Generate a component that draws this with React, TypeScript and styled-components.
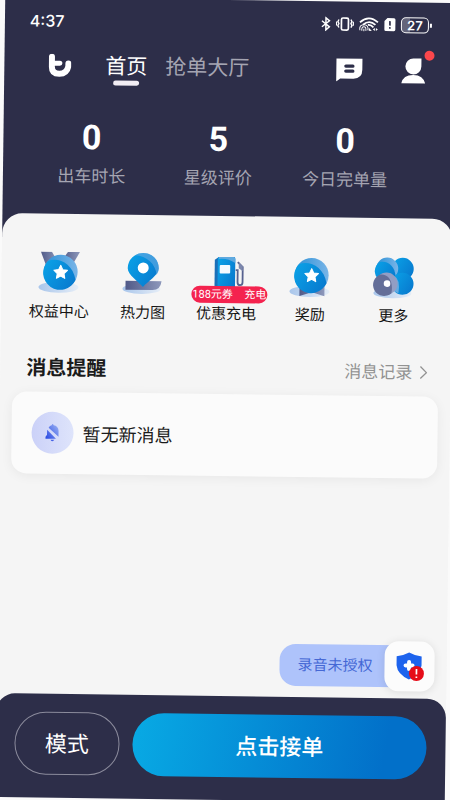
import React from "react";
import styled, { createGlobalStyle } from "styled-components";

const NAVY = "#2d2e49";
const PAPER = "#f5f5f5";

const GlobalStyle = createGlobalStyle`
  * { box-sizing: border-box; }
  body {
    margin: 0;
    overflow: hidden;
    background: #fafafa;
    font-family: Roboto, "Noto Sans CJK SC", sans-serif;
  }
  button { font: inherit; border: 0; padding: 0; background: none; cursor: pointer; }
  a { color: inherit; text-decoration: none; }
  h2, p, dl, dt, dd, ul { margin: 0; padding: 0; }
  svg { display: block; flex: none; }
`;

const Screen = styled.div`
  display: flex;
  flex-direction: column;
  min-height: 100vh;
  background: linear-gradient(${NAVY} 240px, ${PAPER} 240px);
  transform: rotate(0.75deg);
`;

const StatusBar = styled.header`
  display: flex;
  align-items: center;
  justify-content: space-between;
  height: 45px;
  padding: 0 23px 0 25px;
  color: #fff;
`;

const Clock = styled.time`
  font: 500 16px Inter, sans-serif;
`;

const StatusIcons = styled.div`
  display: flex;
  align-items: center;
  gap: 5px;
`;

const Battery = styled.span`
  display: flex;
  align-items: center;
  gap: 1px;
  &::after {
    content: "";
    width: 2px;
    height: 4px;
    background: #fff;
  }
`;

const BatteryLevel = styled.span`
  width: 28px;
  border: 1px solid #fff;
  border-radius: 5px;
  background: linear-gradient(90deg, #64657b 30%, transparent 30%);
  font: 600 13px/14px Inter, sans-serif;
  text-align: center;
`;

const TopNav = styled.nav`
  display: flex;
  align-items: center;
  height: 46px;
  padding: 0 29px 0 44px;
`;

const NavTabs = styled.div`
  display: flex;
  flex: 1;
  gap: 18px;
  margin-left: 34px;
`;

const Tab = styled.a<{ $active?: boolean }>`
  position: relative;
  font-size: 21px;
  line-height: 32px;
  color: ${(p) => (p.$active ? "#fff" : "#a5a5b2")};
  &::after {
    content: "";
    display: ${(p) => (p.$active ? "block" : "none")};
    position: absolute;
    left: 8px;
    right: 8px;
    bottom: -3px;
    height: 5px;
    border-radius: 3px;
    background: #f1edf3;
  }
`;

const NavActions = styled.div`
  display: flex;
  align-items: center;
  gap: 38px;
`;

const IconButton = styled.button`
  position: relative;
`;

const Dot = styled.span`
  position: absolute;
  top: -7px;
  right: -9px;
  width: 10px;
  height: 10px;
  border-radius: 50%;
  background: #fb474c;
`;

const Stats = styled.dl`
  display: grid;
  grid-template-columns: repeat(3, 1fr);
  padding: 28px 45px 26px 25px;
  text-align: center;
`;

const Stat = styled.div`
  display: flex;
  flex-direction: column-reverse;
  gap: 7px;
  dt {
    color: #a5a5b2;
    font-size: 17px;
    line-height: 24px;
    white-space: nowrap;
  }
  dd {
    color: #fff;
    font-size: 34px;
    font-weight: 700;
    line-height: 40px;
  }
`;

const Main = styled.main`
  display: flex;
  flex: 1;
  flex-direction: column;
  padding: 38px 12px 0;
  border-radius: 20px 20px 0 0;
  background: ${PAPER};
`;

const Shortcuts = styled.ul`
  display: grid;
  grid-template-columns: repeat(5, 1fr);
  margin: 0 4px;
  list-style: none;
`;

const Shortcut = styled.button`
  position: relative;
  display: flex;
  flex-direction: column;
  align-items: center;
  gap: 4px;
  width: 100%;
  color: #161616;
  font-size: 15px;
  line-height: 24px;
  white-space: nowrap;
`;

const Promo = styled.span`
  position: absolute;
  top: 32px;
  left: calc(50% - 35px);
  display: flex;
  justify-content: space-between;
  width: 76px;
  padding: 0 1px;
  border-radius: 9px;
  background: #f4234f;
  color: #fff;
  font-size: 11px;
  line-height: 17px;
`;

const SectionHead = styled.div`
  display: flex;
  align-items: center;
  justify-content: space-between;
  margin: 29px 11px 9px 14px;
  line-height: 30px;
  h2 {
    color: #1b1b1b;
    font-size: 20px;
    font-weight: 700;
  }
`;

const HistoryLink = styled.a`
  display: flex;
  align-items: center;
  gap: 7px;
  color: #929292;
  font-size: 17px;
`;

const MessageCard = styled.section`
  display: flex;
  align-items: center;
  gap: 9px;
  min-height: 82px;
  padding: 0 20px;
  border-radius: 15px;
  background: #fbfbfb;
  box-shadow: 0 2px 12px rgba(0, 0, 0, 0.06);
  color: #1b1b1b;
  font-size: 18px;
`;

const BellBadge = styled.span`
  display: grid;
  place-items: center;
  width: 42px;
  height: 42px;
  border-radius: 50%;
  background: linear-gradient(90deg, #cbd1f8, #dee4fb);
`;

const Recording = styled.button`
  display: flex;
  align-items: center;
  align-self: flex-end;
  margin: auto 0 7px;
`;

const RecordingLabel = styled.span`
  height: 42px;
  margin-right: -14px;
  padding: 0 26px 0 18px;
  border-radius: 16px 0 0 16px;
  background: #aec3fb;
  color: #4568d5;
  font-size: 15px;
  line-height: 42px;
`;

const ShieldTile = styled.span`
  display: grid;
  place-items: center;
  width: 50px;
  height: 50px;
  border-radius: 14px;
  background: #fcfcfc;
  box-shadow: 0 1px 9px rgba(0, 0, 0, 0.1);
`;

const BottomArea = styled.footer`
  background: ${PAPER};
`;

const BottomBar = styled.div`
  display: flex;
  gap: 13px;
  padding: 18px 19px 23px;
  border-radius: 19px 19px 0 0;
  background: ${NAVY};
`;

const ActionButton = styled.button<{ $primary?: boolean }>`
  flex: ${(p) => (p.$primary ? "1" : "0 0 105px")};
  height: 63px;
  border-radius: 32px;
  color: #fff;
  font-size: 22px;
  && {
    padding-bottom: 4px;
    border: ${(p) => (p.$primary ? "0" : "1px solid #8b8b9c")};
    background: ${(p) => (p.$primary ? "linear-gradient(100deg, #08aae4, #0270c9 85%)" : "transparent")};
    font-weight: ${(p) => (p.$primary ? 500 : 400)};
  }
`;

const STAR = "M0-7 2.1-2.7 6.8-2.1 3.4 1.3 4.2 6 0 3.8-4.2 6-3.4 1.3-6.8-2.1-2.1-2.7Z";

const Gradients = () => (
  <svg width="0" height="0" aria-hidden="true">
    <defs>
      <linearGradient id="blue" x1="0" y1="0.2" x2="1" y2="0.8">
        <stop offset="0" stopColor="#0aa0e6" />
        <stop offset="1" stopColor="#0879ce" />
      </linearGradient>
      <linearGradient id="sheen" x1="0" y1="0" x2="1" y2="0">
        <stop offset="0" stopColor="#2d91d6" />
        <stop offset="1" stopColor="#79b5e8" />
      </linearGradient>
      <linearGradient id="slate" x1="0" y1="0" x2="1" y2="0">
        <stop offset="0" stopColor="#515a88" />
        <stop offset="1" stopColor="#8d98bb" />
      </linearGradient>
      <linearGradient id="shade" x1="0" y1="0" x2="1" y2="0">
        <stop offset="0" stopColor="#a9c6eb" />
        <stop offset="1" stopColor="#e5edf7" />
      </linearGradient>
      <linearGradient id="bell" x1="0" y1="1" x2="1" y2="0">
        <stop offset="0" stopColor="#1f3fe0" />
        <stop offset="1" stopColor="#9db4f4" />
      </linearGradient>
    </defs>
  </svg>
);

const Art = ({ children }: { children: React.ReactNode }) => (
  <svg width="44" height="44" viewBox="0 0 44 44" aria-hidden="true">
    {children}
  </svg>
);

const Disc = () => (
  <>
    <circle cx="23" cy="20" r="17" fill="url(#sheen)" />
    <path d="M10 9.5C20 5 35 11 38 28A17 17 0 1 1 10 9.5Z" fill="url(#blue)" />
    <path d={STAR} transform="translate(23 20.5)" fill="#fff" stroke="#fff" strokeLinejoin="round" />
  </>
);

const MedalArt = () => (
  <Art>
    <ellipse cx="21" cy="35.500" rx="20" ry="5.500" fill="url(#shade)" />
    <path d="M3 0H14L20 10 10 18Z" fill="url(#slate)" />
    <path d="M30 0H42L34 14 24 9Z" fill="url(#slate)" />
    <Disc />
  </Art>
);

const PinArt = () => (
  <Art>
    <ellipse cx="21" cy="36" rx="19" ry="5" fill="url(#shade)" />
    <path d="M5 28H41Q40 37 32 37H5Z" fill="url(#slate)" />
    <path d="M22.500 34C18 29 7 22 7 15.500A15.500 15.500 0 0 1 38 15.500C38 22 27 29 22.500 34Z" fill="url(#blue)" />
    <path d="M14 2.500C26 3 35 11 36 22Q38 19 38 15.500A15.500 15.500 0 0 0 14 2.500Z" fill="#61a9e2" opacity=".65" />
    <circle cx="22.500" cy="15" r="5.500" fill="#fff" />
  </Art>
);

const PumpArt = () => (
  <Art>
    <path d="M10 6 14 3H30V33H10Z" fill="#1a6fb8" />
    <path d="M14 3H29Q30.500 3 30.500 5V33H13V5Q13 3.500 14 3Z" fill="url(#blue)" />
    <path d="M14 3H29Q30.500 3 30.500 5V9Q23 4 14 5Z" fill="#5fa9df" />
    <rect x="15" y="11" width="10.500" height="8.500" rx="1" fill="#f3faff" />
    <path d="M31 16H33V28Q33 31 35.500 31T38 28V13L33 8" fill="none" stroke="#56618f" strokeWidth="1.800" />
    <path d="M34 8 38 12V17L34 14Z" fill="#7d88ad" />
  </Art>
);

const RewardArt = () => (
  <Art>
    <ellipse cx="21" cy="36.500" rx="20" ry="5.500" fill="url(#shade)" />
    <path d="M11 29H36V41L23.500 37 11 41Z" fill="url(#slate)" />
    <Disc />
  </Art>
);

const MoreArt = () => (
  <Art>
    <ellipse cx="21" cy="37" rx="19" ry="5" fill="url(#shade)" />
    <circle cx="31" cy="12.500" r="11" fill="url(#blue)" />
    <circle cx="15.500" cy="12.500" r="11" fill="url(#sheen)" />
    <path d="M8 6C16 4 23 10 24 20A11 11 0 1 1 8 6Z" fill="url(#blue)" />
    <circle cx="31" cy="27.500" r="11" fill="url(#blue)" />
    <path d="M23 20Q29 23 27 37Q21 35 20 29Z" fill="#66aae0" />
    <circle cx="15" cy="27.500" r="11" fill="#929ec4" />
    <path d="M9 18.500C17 18 22 25 20 37A11 11 0 1 1 9 18.500Z" fill="#646e98" />
    <circle cx="15.500" cy="27.500" r="3.300" fill="#fff" />
  </Art>
);

const BrandLogo = () => (
  <svg width="23" height="24" viewBox="0 0 23 24" role="img" aria-label="首页标志">
    <path
      d="M3.500 3V13Q3.500 20 11 20T20 12.500V9.500"
      fill="none" stroke="#fff" strokeWidth="6" strokeLinecap="round"
    />
    <path d="M4 9.500H11.500" stroke="#fff" strokeWidth="5" strokeLinecap="round" />
  </svg>
);

const ChatIcon = () => (
  <svg width="28" height="24" viewBox="0 0 28 24" aria-hidden="true">
    <path d="M1 1H27V12Q27 21 18 21H5L1 24Z" fill="#fff" />
    <path d="M10.500 8.500H17.500M10.500 13.500H17.500" stroke={NAVY} strokeWidth="3.300" strokeLinecap="round" />
  </svg>
);

const PersonIcon = () => (
  <svg width="24" height="27" viewBox="0 0 24 27" aria-hidden="true">
    <path d="M12 1H20V9A8 8 0 1 1 12 1ZM0 26Q2 17.500 12 17.500T24 26Z" fill="#fff" />
  </svg>
);

const BluetoothIcon = () => (
  <svg width="10" height="15" viewBox="0 0 10 15" aria-hidden="true">
    <path d="M1 4.500 8.500 10.500 5 13.500V1.500L8.500 4.500 1 10.500" fill="none" stroke="#fff" strokeWidth="1.500" />
  </svg>
);

const VibrateIcon = () => (
  <svg width="18" height="15" viewBox="0 0 18 15" aria-hidden="true">
    <rect x="5.500" y="1.500" width="7" height="12" rx="1.500" fill="none" stroke="#fff" strokeWidth="1.700" />
    <path d="M3 3 2 5 3 7 2 9 3 11M.5 5V9M15 3 16 5 15 7 16 9 15 11M17.500 5V9" fill="none" stroke="#fff" strokeWidth="1.400" />
  </svg>
);

const WifiIcon = () => (
  <svg width="20" height="15" viewBox="0 0 20 15" aria-hidden="true">
    <g fill="none" stroke="#fff">
      <path d="M1 5.500Q10-2.500 19 5.500M4 8Q10.500 2.500 16.500 8M9 8Q12 7.500 14.500 10.500" strokeWidth="1.700" />
      <path d="M1 13.500Q0 8 5 8T9 13.500M3 14Q2.500 10 5 10T7 14M5 12V14.500" strokeWidth="1" />
    </g>
    <path d="M10 11 13 14H10ZM14 12.500 16 11V14ZM17 11 19 12.500 17 14Z" fill="#fff" />
  </svg>
);

const SimAlertIcon = () => (
  <svg width="12" height="15" viewBox="0 0 12 15" aria-hidden="true">
    <path d="M3.500 1H10Q11.500 1 11.500 2.500V12.500Q11.500 14 10 14H2Q.5 14 .5 12.500V4Z" fill="#fff" />
    <path d="M6 4V8.500M6 10V11.700" stroke={NAVY} strokeWidth="1.700" />
  </svg>
);

const MutedBell = () => (
  <svg width="16" height="20" viewBox="0 0 16 20" aria-hidden="true">
    <path d="M2.500 7 11.500 16H1V14L2.500 12ZM4 5Q5 3 7 2.500Q8 0 9 2.500Q13.500 3 14 8V14ZM6 17H10Q8 20 6 17Z" fill="url(#bell)" />
  </svg>
);

const ShieldIcon = () => (
  <svg width="30" height="30" viewBox="0 0 30 30" aria-hidden="true">
    <path d="M14.500 1Q20 4 27 5V14Q26 23 14.500 28Q3 23 2 14V5Q9 4 14.500 1Z" fill="#1d63ed" />
    <path d="M14.500 10.500V17.500M11 14H18" stroke="#fff" strokeWidth="4" strokeLinecap="round" />
    <circle cx="22" cy="22" r="7.500" fill="#e60c19" />
    <path d="M22 17.500V23M22 25V26.500" stroke="#fff" strokeWidth="1.700" />
  </svg>
);

const Chevron = () => (
  <svg width="8" height="14" viewBox="0 0 8 14" aria-hidden="true">
    <path d="M1 1 7 7 1 13" fill="none" stroke="#929292" strokeWidth="1.300" />
  </svg>
);

const stats = [
  { label: "出车时长", value: 0 },
  { label: "星级评价", value: 5 },
  { label: "今日完单量", value: 0 },
];

const shortcuts = [
  { label: "权益中心", Icon: MedalArt },
  { label: "热力图", Icon: PinArt },
  { label: "优惠充电", Icon: PumpArt, promo: ["188元券", "充电"] },
  { label: "奖励", Icon: RewardArt },
  { label: "更多", Icon: MoreArt },
];

export default function App() {
  return (
    <>
      <GlobalStyle />
      <Screen>
        <StatusBar>
          <Clock>4:37</Clock>
          <StatusIcons>
            <BluetoothIcon />
            <VibrateIcon />
            <WifiIcon />
            <SimAlertIcon />
            <Battery><BatteryLevel>27</BatteryLevel></Battery>
          </StatusIcons>
        </StatusBar>
        <TopNav>
          <BrandLogo />
          <NavTabs>
            <Tab href="#home" $active>首页</Tab>
            <Tab href="#orders">抢单大厅</Tab>
          </NavTabs>
          <NavActions>
            <IconButton aria-label="消息"><ChatIcon /></IconButton>
            <IconButton aria-label="我的"><PersonIcon /><Dot /></IconButton>
          </NavActions>
        </TopNav>
        <Stats>
          {stats.map((s) => (
            <Stat key={s.label}><dt>{s.label}</dt><dd>{s.value}</dd></Stat>
          ))}
        </Stats>
        <Main>
          <Shortcuts>
            {shortcuts.map(({ label, Icon, promo }) => (
              <li key={label}>
                <Shortcut>
                  <Icon />
                  {label}
                  {promo && <Promo>{promo.map((t) => <span key={t}>{t}</span>)}</Promo>}
                </Shortcut>
              </li>
            ))}
          </Shortcuts>
          <SectionHead>
            <h2>消息提醒</h2>
            <HistoryLink href="#messages">消息记录<Chevron /></HistoryLink>
          </SectionHead>
          <MessageCard>
            <BellBadge><MutedBell /></BellBadge>
            <p>暂无新消息</p>
          </MessageCard>
          <Recording>
            <RecordingLabel>录音未授权</RecordingLabel>
            <ShieldTile><ShieldIcon /></ShieldTile>
          </Recording>
        </Main>
        <BottomArea>
          <BottomBar>
            <ActionButton>模式</ActionButton>
            <ActionButton $primary>点击接单</ActionButton>
          </BottomBar>
        </BottomArea>
      </Screen>
      <Gradients />
    </>
  );
}
